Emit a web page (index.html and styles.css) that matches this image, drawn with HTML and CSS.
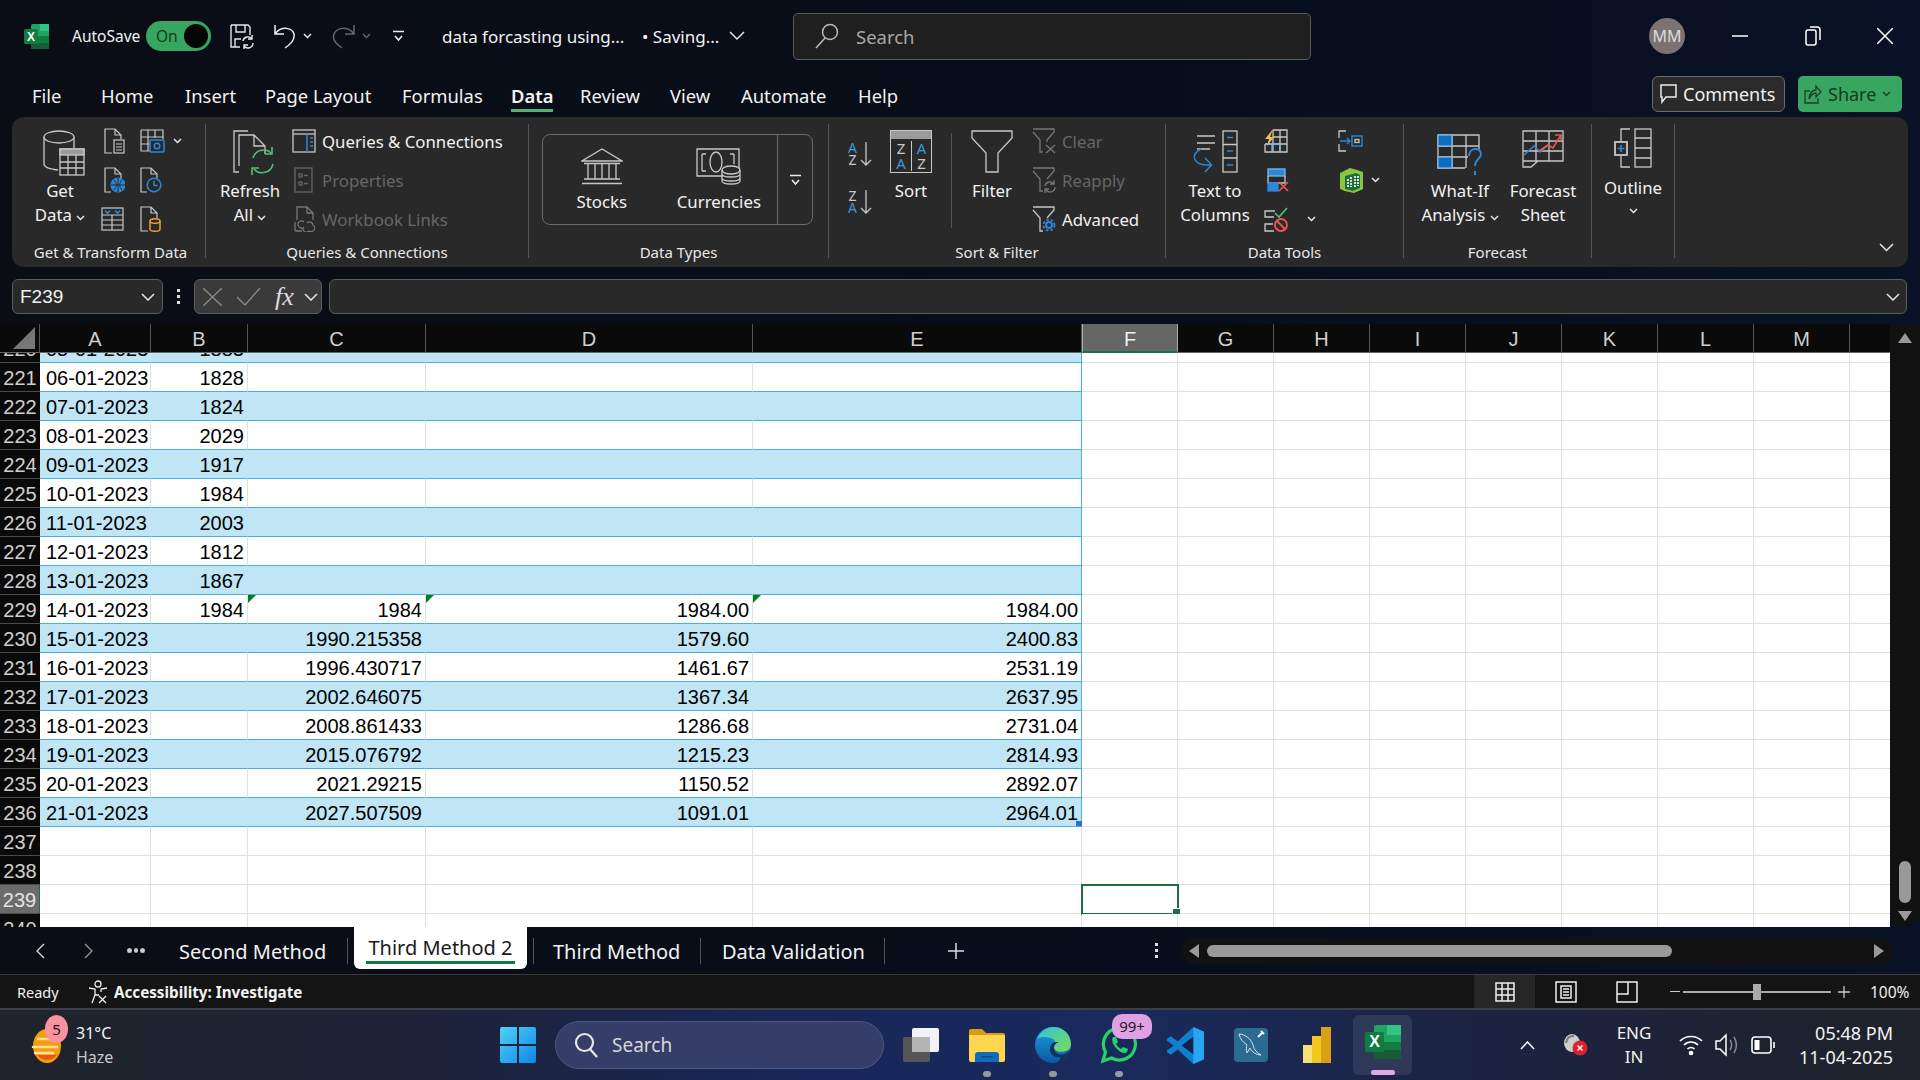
FILE: index.html
```html
<!DOCTYPE html>
<html lang="en">
<head>
    <meta charset="UTF-8">
    <title>data forcasting using - Excel</title>
    <link rel="stylesheet" href="styles.css">
</head>
<body>
    <!-- title bar -->
    <header class="titlebar">
        <svg class="xl-logo" width="25" height="25" viewBox="0 0 25 25">
            <rect x="7" y="0" width="18" height="25" rx="2" fill="#21a366"/>
            <rect x="16" y="0" width="9" height="7" fill="#33c481"/>
            <rect x="7" y="12" width="18" height="7" fill="#107c41"/>
            <rect x="7" y="19" width="18" height="6" rx="1" fill="#185c37"/>
            <rect x="0" y="5" width="14" height="15" rx="1.5" fill="#107c41"/>
            <text x="7" y="16.5" class="xl-x">X</text>
        </svg>
        <span class="autosave">AutoSave</span>
        <div class="toggle"><span>On</span><i></i></div>
        <svg class="qat-save" width="24" height="25" viewBox="0 0 24 25" fill="none" stroke="#e6e6e6" stroke-width="1.4">
            <path d="M1 1h17l2 2v8M1 1v22h9M6 1v7h9V1M5 23v-8h6"/>
            <path d="M13 17a5 5 0 0 1 9-2m1 4a5 5 0 0 1-9 3M22 11v4h-4M14 25v-4h4"/>
        </svg>
        <svg class="qat-undo" width="22" height="26" viewBox="0 0 22 26" fill="none" stroke="#eee" stroke-width="1.5">
            <path d="M2 2v9h9M2 11C8 3 19 4 21 11c1 5-3 10-9 14"/>
        </svg>
        <svg class="chev qat-c1" width="9" height="6" viewBox="0 0 9 6"><path d="M1 1l3.500 3.500L8 1"/></svg>
        <svg class="qat-redo" width="25" height="26" viewBox="0 0 25 26" fill="none" stroke="#666" stroke-width="1.500">
            <path d="M23 2v9h-9M23 11C17 3 6 4 3 11c-2 5 2 10 8 14"/>
        </svg>
        <svg class="chev dim qat-c2" width="9" height="6" viewBox="0 0 9 6"><path d="M1 1l3.500 3.500L8 1"/></svg>
        <svg class="qat-more" width="11" height="12" viewBox="0 0 11 12" fill="none" stroke="#eee" stroke-width="1.500">
            <path d="M0 1.500h11M2 6l3.500 4L9 6"/>
        </svg>
        <span class="doc-name">data forcasting using...</span>
        <span class="doc-state">&bull; Saving...</span>
        <svg class="chev big-chev" width="16" height="10" viewBox="0 0 16 10"><path d="M1 1l7 7 7-7"/></svg>
        <div class="title-search">
            <svg width="24" height="26" viewBox="0 0 24 26" fill="none" stroke="#bbb" stroke-width="1.500">
                <circle cx="15" cy="9" r="7.500"/><path d="M10 15L1 25"/>
            </svg>
            <span>Search</span>
        </div>
        <div class="avatar">MM</div>
        <div class="win-btn btn-min"><svg width="16" height="2" viewBox="0 0 16 2"><path d="M0 1h16" stroke="#fff" stroke-width="1.500"/></svg></div>
        <div class="win-btn btn-max"><svg width="16" height="22" viewBox="0 0 16 22" fill="none" stroke="#fff" stroke-width="1.500"><rect x="1" y="5" width="10" height="15" rx="2"/><path d="M5 2h7a3 3 0 0 1 3 3v10"/></svg></div>
        <div class="win-btn btn-close"><svg width="16" height="16" viewBox="0 0 16 16" stroke="#fff" stroke-width="1.500"><path d="M0 0l16 16M16 0L0 16"/></svg></div>
    </header>

    <!-- ribbon tabs -->
    <nav class="menubar">
        <div class="menu-tabs">
            <span>File</span><span>Home</span><span>Insert</span><span>Page Layout</span><span>Formulas</span>
            <span class="on">Data</span><span>Review</span><span>View</span><span>Automate</span><span>Help</span>
        </div>
        <div class="btn-comments">
            <svg width="17" height="20" viewBox="0 0 17 20" fill="none" stroke="#eee" stroke-width="1.500"><path d="M1 1h15v12H6l-4 5v-5H1z"/></svg>
            Comments
        </div>
        <div class="btn-share">
            <svg width="18" height="20" viewBox="0 0 18 20" fill="none" stroke="#1c3d28" stroke-width="1.300"><path d="M6 7H1v12h13v-5M5 15c0-6 4-9 7-9V2l5 6-5 5V9c-3 0-5 2-7 6z"/></svg>
            Share
            <svg class="chev dark" width="9" height="6" viewBox="0 0 9 6"><path d="M1 1l3.500 3.500L8 1"/></svg>
        </div>
    </nav>

    <!-- ribbon -->
    <section class="ribbon">
        <div class="group g-transform">
            <div class="group-body">
                <div class="big w88">
                    <div class="big-icon">
                        <svg class="shift-r" width="42" height="46" viewBox="0 0 42 46" fill="none" stroke="#c8c8c8" stroke-width="1.300">
                            <ellipse cx="16" cy="7" rx="15" ry="6"/>
                            <path d="M1 7v27c0 3 5 5 14 6M31 7v11"/>
                            <rect x="17" y="19" width="24" height="26" fill="#2a2a2a"/>
                            <rect x="17" y="19" width="24" height="6" fill="#9a9a9a"/>
                            <path d="M17 32h24M17 38h24M25 25v20M33 25v20"/>
                        </svg>
                    </div>
                    <span>Get</span>
                    <span>Data <svg class="chev" width="9" height="6" viewBox="0 0 9 6"><path d="M1 1l3.500 3.500L8 1"/></svg></span>
                </div>
                <div class="stack w36">
                    <div class="s-row">
                        <svg width="21" height="26" viewBox="0 0 21 26" fill="none" stroke="#c8c8c8" stroke-width="1.200"><path d="M8 25H1V1h10l6 6v4M11 1v6h6"/><rect x="10" y="12" width="10" height="13"/><path d="M12 16h6M12 19h6M12 22h6"/></svg>
                    </div>
                    <div class="s-row">
                        <svg width="21" height="26" viewBox="0 0 21 26" fill="none" stroke="#c8c8c8" stroke-width="1.200"><path d="M7 25H1V1h10l6 6v5M11 1v6h6"/><circle cx="14" cy="18" r="7" fill="#2b88d8" stroke="#2b88d8"/><path d="M7 18h14M14 11v14M10 13c3 3 3 7 0 10M18 13c-3 3-3 7 0 10" stroke="#2a2a2a" stroke-width="1"/></svg>
                    </div>
                    <div class="s-row nudge-l">
                        <svg width="23" height="24" viewBox="0 0 23 24" fill="none" stroke="#c8c8c8" stroke-width="1.200"><rect x="1" y="1" width="21" height="22"/><path d="M4 3.500l2.500 2.500L9 3.500M14 3.500l2.500 2.500L19 3.500" stroke="#2b88d8" stroke-width="1.600"/><path d="M1 8h21M1 13h21M1 18h21M11 8v15"/></svg>
                    </div>
                </div>
                <div class="stack w64">
                    <div class="s-row">
                        <svg width="25" height="24" viewBox="0 0 25 24" fill="none" stroke="#c8c8c8" stroke-width="1.200"><path d="M1 1h22v9M1 1v21h9M1 8h22M1 15h9M8 1v21M15 1v8"/><rect x="10" y="11" width="14" height="12" rx="1" stroke="#2b88d8" stroke-width="1.500"/><circle cx="17" cy="17" r="2.800" stroke="#2b88d8" stroke-width="1.500"/></svg>
                        <svg class="chev gap-chev" width="9" height="6" viewBox="0 0 9 6"><path d="M1 1l3.500 3.500L8 1"/></svg>
                    </div>
                    <div class="s-row">
                        <svg width="22" height="26" viewBox="0 0 22 26" fill="none" stroke="#c8c8c8" stroke-width="1.200"><path d="M7 25H1V1h10l6 6v4M11 1v6h6"/><circle cx="14" cy="18" r="6.800" stroke="#2b88d8" stroke-width="1.500"/><path d="M14 14v4.500h3.500" stroke="#2b88d8" stroke-width="1.400"/></svg>
                    </div>
                    <div class="s-row">
                        <svg width="22" height="26" viewBox="0 0 22 26" fill="none" stroke="#c8c8c8" stroke-width="1.200"><path d="M8 25H1V1h10l6 6v5M11 1v6h6"/><path d="M10 15c0-3 10-3 10 0v8c0 3-10 3-10 0z" stroke="#e8a33d" stroke-width="1.500"/><path d="M10 15c0 3 10 3 10 0" stroke="#e8a33d" stroke-width="1.500"/></svg>
                    </div>
                </div>
            </div>
            <div class="group-label">Get &amp; Transform Data</div>
        </div>

        <div class="group g-queries">
            <div class="group-body">
                <div class="big w80">
                    <div class="big-icon">
                        <svg class="shift-r" width="42" height="46" viewBox="0 0 42 46" fill="none" stroke="#c8c8c8" stroke-width="1.300">
                            <path d="M6 42H1V1h14M6 36V5h15l11 11v8M21 5v11h11"/>
                            <path d="M20 28a11 11 0 0 1 19-4M40 34a11 11 0 0 1-19 5M39 17v7h-7M19 45v-7h7" stroke="#4ec274" stroke-width="1.600"/>
                        </svg>
                    </div>
                    <span>Refresh</span>
                    <span>All <svg class="chev" width="9" height="6" viewBox="0 0 9 6"><path d="M1 1l3.500 3.500L8 1"/></svg></span>
                </div>
                <div class="stack wide">
                    <div class="s-row">
                        <svg class="s-ic" width="24" height="26" viewBox="0 0 24 26" fill="none" stroke="#c8c8c8" stroke-width="1.300"><rect x="1" y="2" width="22" height="22"/><path d="M1 6h22"/><path d="M15 6v18" stroke="#2b88d8" stroke-width="1.500"/><path d="M18 10h3M18 14h3M18 18h3" stroke="#2b88d8" stroke-width="1.500"/></svg>
                        <span>Queries &amp; Connections</span>
                    </div>
                    <div class="s-row off">
                        <svg class="s-ic" width="24" height="26" viewBox="0 0 24 26" fill="none" stroke="#666" stroke-width="1.300"><rect x="3" y="1" width="17" height="24"/><rect x="7" y="7" width="3" height="3"/><rect x="7" y="15" width="3" height="3"/><path d="M12 8.500h4M12 16.500h4"/></svg>
                        <span>Properties</span>
                    </div>
                    <div class="s-row off">
                        <svg class="s-ic" width="24" height="26" viewBox="0 0 24 26" fill="none" stroke="#777" stroke-width="1.300"><path d="M5 14V1h10l6 6v7M15 1v6h6M3 25v-9M3 25h7"/><path d="M12 16a3.500 3.500 0 0 0-6 3 3.500 3.500 0 0 0 6 2M11 22a3.500 3.500 0 0 0 6 3 3.500 3.500 0 0 0 4-6 3.500 3.500 0 0 0-6-2"/></svg>
                        <span>Workbook Links</span>
                    </div>
                </div>
            </div>
            <div class="group-label">Queries &amp; Connections</div>
        </div>

        <div class="group g-types">
            <div class="group-body">
                <div class="type-box">
                    <div class="type-item w118">
                        <svg width="42" height="37" viewBox="0 0 42 37" fill="none" stroke="#c8c8c8" stroke-width="1.300"><path d="M21 1L1 13h40zM3 15.500h36M7 16v15M14 16v15M21 16v15M28 16v15M35 16v15M3 31h36M1 35.500h40"/></svg>
                        <span>Stocks</span>
                    </div>
                    <div class="type-item w117">
                        <svg width="46" height="37" viewBox="0 0 46 37" fill="none" stroke="#c8c8c8" stroke-width="1.300"><path d="M27 28H1V1h42v20"/><path d="M6 6v17M10 6H6M6 23h4M38 6v10M34 6h4"/><ellipse cx="20" cy="14" rx="6" ry="10"/><ellipse cx="35" cy="22" rx="9" ry="4" fill="#2a2a2a"/><path d="M26 22v11c0 2 4 3 9 3s9-1 9-3V22M26 26c0 2 4 3 9 3s9-1 9-3M26 30c0 2 4 3 9 3s9-1 9-3"/></svg>
                        <span>Currencies</span>
                    </div>
                    <div class="type-drop">
                        <svg width="11" height="12" viewBox="0 0 11 12" fill="none" stroke="#eee" stroke-width="1.500"><path d="M0 1.500h11M2 6l3.500 4L9 6"/></svg>
                    </div>
                </div>
            </div>
            <div class="group-label">Data Types</div>
        </div>

        <div class="group g-sort">
            <div class="group-body">
                <div class="sort-col">
                    <div class="az">
                        <div class="az-letters"><b>A</b><span>Z</span></div>
                        <svg width="12" height="24" viewBox="0 0 12 24" fill="none" stroke="#c8c8c8" stroke-width="1.300"><path d="M6 0v23M1 18l5 5 5-5"/></svg>
                    </div>
                    <div class="az">
                        <div class="az-letters"><span>Z</span><b>A</b></div>
                        <svg width="12" height="24" viewBox="0 0 12 24" fill="none" stroke="#c8c8c8" stroke-width="1.300"><path d="M6 0v23M1 18l5 5 5-5"/></svg>
                    </div>
                </div>
                <div class="big w42">
                    <div class="big-icon">
                        <div class="sort-ic">
                            <div class="sort-head"></div>
                            <div class="sort-cols"><div><span>Z</span><b>A</b></div><div><b>A</b><span>Z</span></div></div>
                        </div>
                    </div>
                    <span>Sort</span>
                </div>
                <div class="v-sep"></div>
                <div class="big w42">
                    <div class="big-icon">
                        <svg width="42" height="43" viewBox="0 0 42 43" fill="none" stroke="#c8c8c8" stroke-width="1.300"><path d="M1 1h40v7L27 23v19H15V23L1 8z"/></svg>
                    </div>
                    <span>Filter</span>
                </div>
                <div class="stack f-stack">
                    <div class="s-row off">
                        <svg class="s-ic" width="24" height="26" viewBox="0 0 24 26" fill="none" stroke="#777" stroke-width="1.300"><path d="M1 1h21v3l-7 8v2M1 4l7 8v12h3"/><path d="M14 17l9 8M23 17l-9 8"/></svg>
                        <span>Clear</span>
                    </div>
                    <div class="s-row off">
                        <svg class="s-ic" width="24" height="26" viewBox="0 0 24 26" fill="none" stroke="#777" stroke-width="1.300"><path d="M1 1h21v3l-7 8M1 4l7 8v12h3"/><path d="M13 19a5 5 0 0 1 9-2M23 20a5 5 0 0 1-9 3M22 13v4h-4M13 26v-4h4"/></svg>
                        <span>Reapply</span>
                    </div>
                    <div class="s-row">
                        <svg class="s-ic" width="24" height="26" viewBox="0 0 24 26" fill="none" stroke="#c8c8c8" stroke-width="1.300"><path d="M1 1h21v3l-7 8M1 4l7 8v13h3"/><circle cx="17" cy="19" r="3" stroke="#2b88d8" stroke-width="2"/><circle cx="17" cy="19" r="5.500" stroke="#2b88d8" stroke-width="1.800" stroke-dasharray="2.500 2"/></svg>
                        <span>Advanced</span>
                    </div>
                </div>
            </div>
            <div class="group-label">Sort &amp; Filter</div>
        </div>

        <div class="group g-tools">
            <div class="group-body">
                <div class="big w74">
                    <div class="big-icon">
                        <svg width="46" height="44" viewBox="0 0 46 44" fill="none" stroke="#c8c8c8" stroke-width="1.300"><path d="M5 6h18M5 13h18M5 19h13"/><rect x="31" y="1" width="14" height="41"/><path d="M31 14.500h14M31 28h14"/><path d="M35 7.500h6M35 21h6M35 35h6" stroke="#2b88d8" stroke-width="1.500"/><path d="M9 19C-2 24 0 36 19 35M13 28l6.500 7-6.500 7" stroke="#2b88d8" stroke-width="1.500"/></svg>
                    </div>
                    <span>Text to</span>
                    <span>Columns</span>
                </div>
                <div class="stack w74b">
                    <div class="s-row">
                        <svg width="24" height="24" viewBox="0 0 24 24" fill="none" stroke="#c8c8c8" stroke-width="1.300"><path d="M9 1h14v22H1v-8M9 1v22M16 1v22M9 8h14M1 15h22"/><path d="M8 15v8M16 15v8M1 15h15" stroke="#7ab8e8"/><path d="M9 0L1 10h4l-2 7 7-9H6l3-8z" fill="#f2c14e" stroke="none"/></svg>
                    </div>
                    <div class="s-row nudge-r">
                        <svg width="22" height="25" viewBox="0 0 22 25" fill="none" stroke="#c8c8c8" stroke-width="1.300"><rect x="1" y="1" width="17" height="7" fill="#2b88d8" stroke="#7ab8e8"/><path d="M1 8v7h17V8"/><rect x="1" y="15" width="10" height="8" fill="#2b88d8" stroke="#2b88d8"/><path d="M12 14l9 9M21 14l-9 9" stroke="#e85858" stroke-width="1.700"/></svg>
                    </div>
                    <div class="s-row">
                        <svg width="25" height="25" viewBox="0 0 25 25" fill="none" stroke="#c8c8c8" stroke-width="1.300"><path d="M11 4H1v6h9M9 17H1v7h9"/><path d="M11 6l4 4 8-9" stroke="#4ec274" stroke-width="1.600"/><circle cx="17" cy="18" r="6" stroke="#e85858" stroke-width="1.800"/><path d="M13 14l8 8" stroke="#e85858" stroke-width="1.800"/></svg>
                        <svg class="chev gap-chev2" width="9" height="6" viewBox="0 0 9 6"><path d="M1 1l3.500 3.500L8 1"/></svg>
                    </div>
                </div>
                <div class="stack">
                    <div class="s-row">
                        <svg width="25" height="22" viewBox="0 0 25 22" fill="none" stroke="#c8c8c8" stroke-width="1.300"><path d="M8 1H1v7M1 14v7h7"/><path d="M2 11h10M9 8l3 3-3 3" stroke="#2b88d8" stroke-width="1.400"/><rect x="14" y="6" width="10" height="10" stroke="#2b88d8" stroke-width="1.400"/><rect x="17" y="9.500" width="4" height="3" stroke="#c8c8c8"/></svg>
                    </div>
                    <div class="s-row">
                        <svg width="25" height="25" viewBox="0 0 25 25"><path d="M2 5l10-5 7 2 6 2v17l-9 4-9-2-5-2z" fill="#8cc63f"/><path d="M7 8l11-3 4 2v13l-7 3-8-2z" fill="#1e6b3c"/><path d="M10 11v8M13 9v10M17 8v11M20 8v10" stroke="#fff" stroke-width="1.600" stroke-dasharray="2 1"/></svg>
                        <svg class="chev gap-chev3" width="9" height="6" viewBox="0 0 9 6"><path d="M1 1l3.500 3.500L8 1"/></svg>
                    </div>
                </div>
            </div>
            <div class="group-label">Data Tools</div>
        </div>

        <div class="group g-forecast">
            <div class="group-body">
                <div class="big w92">
                    <div class="big-icon icon-low">
                        <svg width="46" height="42" viewBox="0 0 46 42" fill="none" stroke="#c8c8c8" stroke-width="1.300"><path d="M1 1h41v14M1 1v33h27M1 12h41M1 23h30M15 1v33M29 1v33"/><rect x="1" y="1" width="14" height="11" fill="#0f6cbd" stroke="#7ab8e8"/><rect x="1" y="23" width="14" height="11" fill="#0f6cbd" stroke="#7ab8e8"/><path d="M32 22c0-9 12-9 12-2 0 5-6 5-6 12M38 37v4" stroke="#2b88d8" stroke-width="2"/></svg>
                    </div>
                    <span>What-If</span>
                    <span>Analysis <svg class="chev" width="9" height="6" viewBox="0 0 9 6"><path d="M1 1l3.500 3.500L8 1"/></svg></span>
                </div>
                <div class="big w74">
                    <div class="big-icon">
                        <svg width="42" height="38" viewBox="0 0 42 38" fill="none" stroke="#c8c8c8" stroke-width="1.300"><path d="M1 37V1h40v30H16l-7 6zM1 31h15M14 1v30M27 1v30M1 11h40M1 21h40"/><path d="M2 25l10-9 6 6 9-8" stroke="#2b88d8" stroke-width="1.600"/><path d="M17 21l9-6 5 3 8-13M33 5h6v6" stroke="#e85858" stroke-width="1.600"/></svg>
                    </div>
                    <span>Forecast</span>
                    <span>Sheet</span>
                </div>
            </div>
            <div class="group-label">Forecast</div>
        </div>

        <div class="group g-outline">
            <div class="big outline">
                <div class="big-icon">
                    <svg width="38" height="40" viewBox="0 0 38 40" fill="none" stroke="#c8c8c8" stroke-width="1.300"><rect x="21" y="1" width="16" height="38"/><path d="M21 10h16M21 20h16M21 30h16M16 1H7v12M7 28v11h9"/><rect x="1" y="14" width="12" height="13" stroke-width="1.800"/><path d="M7 17v7M3.500 20.500h7" stroke="#2b88d8" stroke-width="1.700"/></svg>
                </div>
                <span>Outline</span>
                <svg class="chev outline-chev" width="9" height="6" viewBox="0 0 9 6"><path d="M1 1l3.500 3.500L8 1"/></svg>
            </div>
        </div>

        <div class="ribbon-end">
            <svg class="chev" width="15" height="9" viewBox="0 0 15 9"><path d="M1 1l6.500 6.500L14 1"/></svg>
        </div>
    </section>

    <!-- formula bar -->
    <div class="formula-bar">
        <div class="name-box">F239
            <svg class="chev" width="14" height="8" viewBox="0 0 14 8"><path d="M1 1l6 6 6-6"/></svg>
        </div>
        <div class="fx-dots"><i></i><i></i><i></i></div>
        <div class="fx-box">
            <svg width="19" height="18" viewBox="0 0 19 18" stroke="#888" stroke-width="1.400"><path d="M0 0l19 18M19 0L0 18"/></svg>
            <svg class="fx-check" width="24" height="18" viewBox="0 0 24 18" fill="none" stroke="#888" stroke-width="1.400"><path d="M0 9l8 8L23 0"/></svg>
            <em>fx</em>
            <svg class="chev" width="14" height="8" viewBox="0 0 14 8"><path d="M1 1l6 6 6-6"/></svg>
        </div>
        <div class="fx-input">
            <svg class="chev" width="14" height="8" viewBox="0 0 14 8"><path d="M1 1l6 6 6-6"/></svg>
        </div>
    </div>

    <!-- worksheet -->
    <div class="sheet">
        <div class="grid-area">
            <div class="col-heads">
                <div class="corner"><svg width="22" height="22" viewBox="0 0 22 22"><path d="M22 0v22H0z" fill="#777"/></svg></div>
                <div class="ch w111">A</div>
                <div class="ch w97">B</div>
                <div class="ch w178">C</div>
                <div class="ch w327">D</div>
                <div class="ch w329">E</div>
                <div class="ch w96 sel">F</div>
                <div class="ch w96">G</div>
                <div class="ch w96">H</div>
                <div class="ch w96">I</div>
                <div class="ch w96">J</div>
                <div class="ch w96">K</div>
                <div class="ch w96">L</div>
                <div class="ch w96">M</div>
            </div>
            <div class="cells">
                <table>
                    <colgroup><col class="c-h"><col class="c-a"><col class="c-b"><col class="c-c"><col class="c-d"><col class="c-e"><col></colgroup>
                    <tr class="blue"><th>220</th><td>05-01-2023</td><td class="n">1883</td><td></td><td></td><td class="last"></td><td class="rest"></td></tr>
                    <tr><th>221</th><td>06-01-2023</td><td class="n">1828</td><td></td><td></td><td class="last"></td><td class="rest"></td></tr>
                    <tr class="blue"><th>222</th><td>07-01-2023</td><td class="n">1824</td><td></td><td></td><td class="last"></td><td class="rest"></td></tr>
                    <tr><th>223</th><td>08-01-2023</td><td class="n">2029</td><td></td><td></td><td class="last"></td><td class="rest"></td></tr>
                    <tr class="blue"><th>224</th><td>09-01-2023</td><td class="n">1917</td><td></td><td></td><td class="last"></td><td class="rest"></td></tr>
                    <tr><th>225</th><td>10-01-2023</td><td class="n">1984</td><td></td><td></td><td class="last"></td><td class="rest"></td></tr>
                    <tr class="blue"><th>226</th><td>11-01-2023</td><td class="n">2003</td><td></td><td></td><td class="last"></td><td class="rest"></td></tr>
                    <tr><th>227</th><td>12-01-2023</td><td class="n">1812</td><td></td><td></td><td class="last"></td><td class="rest"></td></tr>
                    <tr class="blue"><th>228</th><td>13-01-2023</td><td class="n">1867</td><td></td><td></td><td class="last"></td><td class="rest"></td></tr>
                    <tr><th>229</th><td>14-01-2023</td><td class="n">1984</td><td class="n flag">1984</td><td class="n flag">1984.00</td><td class="n flag last">1984.00</td><td class="rest"></td></tr>
                    <tr class="blue"><th>230</th><td>15-01-2023</td><td></td><td class="n">1990.215358</td><td class="n">1579.60</td><td class="n last">2400.83</td><td class="rest"></td></tr>
                    <tr><th>231</th><td>16-01-2023</td><td></td><td class="n">1996.430717</td><td class="n">1461.67</td><td class="n last">2531.19</td><td class="rest"></td></tr>
                    <tr class="blue"><th>232</th><td>17-01-2023</td><td></td><td class="n">2002.646075</td><td class="n">1367.34</td><td class="n last">2637.95</td><td class="rest"></td></tr>
                    <tr><th>233</th><td>18-01-2023</td><td></td><td class="n">2008.861433</td><td class="n">1286.68</td><td class="n last">2731.04</td><td class="rest"></td></tr>
                    <tr class="blue"><th>234</th><td>19-01-2023</td><td></td><td class="n">2015.076792</td><td class="n">1215.23</td><td class="n last">2814.93</td><td class="rest"></td></tr>
                    <tr><th>235</th><td>20-01-2023</td><td></td><td class="n">2021.29215</td><td class="n">1150.52</td><td class="n last">2892.07</td><td class="rest"></td></tr>
                    <tr class="blue"><th>236</th><td>21-01-2023</td><td></td><td class="n">2027.507509</td><td class="n">1091.01</td><td class="n last corner-handle">2964.01</td><td class="rest"></td></tr>
                    <tr class="plain"><th>237</th><td></td><td></td><td></td><td></td><td></td><td class="rest"></td></tr>
                    <tr class="plain"><th>238</th><td></td><td></td><td></td><td></td><td></td><td class="rest"></td></tr>
                    <tr class="plain"><th class="sel">239</th><td></td><td></td><td></td><td></td><td></td><td class="rest"><div class="active-cell"></div></td></tr>
                    <tr class="plain"><th>240</th><td></td><td></td><td></td><td></td><td></td><td class="rest"></td></tr>
                </table>
            </div>
        </div>
        <div class="v-scroll">
            <svg width="14" height="10" viewBox="0 0 14 10"><path d="M7 0l7 10H0z" fill="#999"/></svg>
            <div class="v-thumb"></div>
            <svg width="14" height="10" viewBox="0 0 14 10"><path d="M7 10l7-10H0z" fill="#999"/></svg>
        </div>
    </div>

    <!-- sheet tabs -->
    <div class="tabs-bar">
        <svg class="nav-prev" width="9" height="16" viewBox="0 0 9 16" fill="none" stroke="#ddd" stroke-width="1.300"><path d="M8 1L1 8l7 7"/></svg>
        <svg class="nav-next" width="9" height="16" viewBox="0 0 9 16" fill="none" stroke="#999" stroke-width="1.300"><path d="M1 1l7 7-7 7"/></svg>
        <div class="nav-more"><i></i><i></i><i></i></div>
        <div class="tab t1">Second Method</div>
        <div class="tab t2 on"><span>Third Method 2</span></div>
        <div class="tab t3">Third Method</div>
        <div class="tab t4">Data Validation</div>
        <svg class="tab-add" width="16" height="16" viewBox="0 0 16 16" stroke="#ddd" stroke-width="1.500"><path d="M8 0v16M0 8h16"/></svg>
        <div class="tab-dots"><i></i><i></i><i></i></div>
        <div class="h-scroll">
            <svg width="10" height="14" viewBox="0 0 10 14"><path d="M0 7l10-7v14z" fill="#999"/></svg>
            <div class="h-thumb"></div>
            <svg width="10" height="14" viewBox="0 0 10 14"><path d="M10 7L0 0v14z" fill="#999"/></svg>
        </div>
    </div>

    <!-- status bar -->
    <footer class="statusbar">
        <span class="ready">Ready</span>
        <svg class="acc-ic" width="20" height="24" viewBox="0 0 20 24" fill="none" stroke="#eee" stroke-width="1.300"><circle cx="10" cy="4" r="3"/><path d="M1 8l6 1v6l-3 8M19 8l-6 1v3M7 15h4"/><path d="M11 16l7 7M18 16l-7 7"/></svg>
        <b class="acc-text">Accessibility: Investigate</b>
        <div class="view-btn on"><svg width="20" height="20" viewBox="0 0 20 20" fill="none" stroke="#eee" stroke-width="1.500"><rect x="1" y="1" width="18" height="18"/><path d="M7 1v18M13 1v18M1 7h18M1 13h18"/></svg></div>
        <div class="view-btn"><svg width="22" height="22" viewBox="0 0 22 22" fill="none" stroke="#eee" stroke-width="1.500"><rect x="1" y="1" width="20" height="20"/><rect x="6" y="5" width="10" height="12"/><path d="M8 8h6M8 11h6M8 14h6"/></svg></div>
        <div class="view-btn"><svg width="22" height="22" viewBox="0 0 22 22" fill="none" stroke="#eee" stroke-width="1.500"><rect x="1" y="1" width="20" height="20"/><path d="M12 1v12H1"/></svg></div>
        <span class="zoom-minus"></span>
        <div class="zoom-slider"><i></i></div>
        <svg class="zoom-plus" width="12" height="12" viewBox="0 0 12 12" stroke="#ccc" stroke-width="1.300"><path d="M6 0v12M0 6h12"/></svg>
        <span class="zoom-val">100%</span>
    </footer>

    <!-- windows taskbar -->
    <div class="taskbar">
        <div class="weather">
            <div class="weather-ic">
                <svg width="34" height="36" viewBox="0 0 34 36">
                    <ellipse cx="17" cy="19" rx="14" ry="17" fill="#f59e0b"/>
                    <path d="M7 28a14 17 0 0 0 20 0z" fill="#e8590c"/>
                    <path d="M8 12h22M3 20h24M5 26h18" stroke="#f7dfa0" stroke-width="2.500" stroke-linecap="round"/>
                </svg>
                <span class="weather-badge">5</span>
            </div>
            <div class="weather-text"><span>31&deg;C</span><span class="haze">Haze</span></div>
        </div>
        <svg class="start" width="36" height="36" viewBox="0 0 36 36">
            <defs><linearGradient id="win" x1="0" y1="0" x2="1" y2="1"><stop offset="0" stop-color="#4fd3f7"/><stop offset="1" stop-color="#0e86e6"/></linearGradient></defs>
            <path d="M0 2a2 2 0 0 1 2-2h15v17H0zM19 0h15a2 2 0 0 1 2 2v15H19zM0 19h17v17H2a2 2 0 0 1-2-2zM19 19h17v15a2 2 0 0 1-2 2H19z" fill="url(#win)"/>
        </svg>
        <div class="task-search">
            <svg width="24" height="26" viewBox="0 0 24 26" fill="none" stroke="#e8e8e8" stroke-width="2.200"><circle cx="10.500" cy="10.500" r="8.500"/><path d="M16 17l7 8"/></svg>
            <span>Search</span>
        </div>
        <div class="app"><svg width="37" height="34" viewBox="0 0 37 34"><rect x="0" y="9" width="27" height="25" rx="2" fill="#555"/><rect x="9" y="0" width="27" height="24" rx="2" fill="#f2f2f2"/><rect x="9" y="9" width="18" height="15" fill="#b4b4b4"/></svg></div>
        <div class="app running"><svg width="36" height="34" viewBox="0 0 36 34"><path d="M0 3a2 2 0 0 1 2-2h11l4 4h17a2 2 0 0 1 2 2v4H0z" fill="#d89b14"/><path d="M0 7h36v25a2 2 0 0 1-2 2H2a2 2 0 0 1-2-2z" fill="#ffd54f"/><path d="M6 34v-7a3 3 0 0 1 3-3h18a3 3 0 0 1 3 3v7z" fill="#0f6cbd"/><rect x="12" y="28" width="12" height="1.500" fill="#0b4f8a"/></svg></div>
        <div class="app running"><svg width="36" height="36" viewBox="0 0 38 38"><defs><linearGradient id="edge1" x1="0" y1="0" x2="1" y2="1"><stop offset="0" stop-color="#2fc3dc"/><stop offset="1" stop-color="#7ddc54"/></linearGradient><linearGradient id="edge2" x1="0" y1="0" x2="0" y2="1"><stop offset="0" stop-color="#1b9de2"/><stop offset="1" stop-color="#0c59a4"/></linearGradient></defs><circle cx="19" cy="19" r="19" fill="url(#edge2)"/><path d="M2 13C6 4 13 0 20 0c10 0 18 8 18 18 0 6-5 8-10 8-5 0-8-2-8-5 2-2 3-7-3-9C11 10 5 10 2 13z" fill="url(#edge1)"/><path d="M20 21c0 5 3 8 8 8s7-3 9-5c-2 8-9 14-16 14 4-1 6-4 6-6-6 1-13-4-11-11 1-4 5-6 9-5-3 1-5 3-5 5z" fill="#10335c"/></svg></div>
        <div class="app running"><svg width="38" height="38" viewBox="0 0 38 38" fill="none"><path d="M3 35l2.500-9a16 16 0 1 1 6 6z" stroke="#25d366" stroke-width="3.200"/><path d="M13 11c-2 3 0 8 4 12s8 5 10 3l1-3-5-2-2 2c-2-1-4-3-5-5l2-2-2-5z" fill="#25d366"/></svg><span class="wa-badge">99+</span></div>
        <div class="app"><svg width="37" height="37" viewBox="0 0 38 38"><path d="M27 0l11 5v28l-11 5-16-15-7 5.500L0 26v-2l7-5-7-5v-2l4-2.500L11 15z" fill="#0f7fd0"/><path d="M27 0l11 5v28l-11 5z" fill="#2aa5f0"/><path d="M27 10L15 19l12 9z" fill="#14214a"/></svg></div>
        <div class="app"><svg width="34" height="34" viewBox="0 0 34 34"><rect width="34" height="34" rx="4" fill="#2d6a8f"/><path d="M5 6c6 0 12 5 14 11 1 5 4 8 8 10-5 0-9-3-11-7l-3 5c-1-3-1-6 0-8-4-3-7-6-8-11z" fill="none" stroke="#d5e3ec" stroke-width="1"/><path d="M24 9l5-5M27 3l3 3" stroke="#e8f0f4" stroke-width="2"/></svg></div>
        <div class="app"><svg width="28" height="36" viewBox="0 0 28 36"><rect x="18" y="0" width="10" height="36" fill="#d9a016"/><rect x="9" y="9" width="9" height="27" fill="#f2c81e"/><rect x="0" y="18" width="9" height="18" fill="#f7df7a"/></svg></div>
        <div class="app active">
            <svg width="36" height="36" viewBox="0 0 36 36"><rect x="9" y="1" width="27" height="34" rx="2" fill="#21a366"/><rect x="22" y="1" width="14" height="10" fill="#33c481"/><rect x="9" y="18" width="27" height="9" fill="#107c41"/><rect x="9" y="26" width="27" height="9" rx="1" fill="#185c37"/><rect x="0" y="8" width="19" height="20" rx="2" fill="#107c41"/><text x="9.500" y="23" class="xl-x big-x">X</text></svg>
            <span class="active-pill"></span>
        </div>
        <svg class="chevron-up" width="15" height="9" viewBox="0 0 15 9" fill="none" stroke="#fff" stroke-width="1.500"><path d="M1 8l6.500-7L14 8"/></svg>
        <svg class="tray-cloud" width="25" height="22" viewBox="0 0 25 22"><ellipse cx="9" cy="9" rx="8" ry="9" fill="#cfcfcf"/><path d="M3 9a7 8 0 0 1 8-7" stroke="#777" fill="none" stroke-width="2"/><circle cx="17" cy="14" r="7.500" fill="#e0202e"/><path d="M14.500 11.500l5 5M19.500 11.500l-5 5" stroke="#fff" stroke-width="1.500"/></svg>
        <div class="lang"><span>ENG</span><span>IN</span></div>
        <svg class="tray-wifi" width="24" height="22" viewBox="0 0 24 22" fill="none" stroke="#fff" stroke-width="1.700"><path d="M1 7c6-6 16-6 22 0M5 11c4-4 10-4 14 0M8.500 15c2-2 5-2 7 0"/><circle cx="12" cy="19" r="1.500" fill="#fff"/></svg>
        <svg class="tray-vol" width="24" height="24" viewBox="0 0 24 24" fill="none" stroke="#fff" stroke-width="1.500"><path d="M1 8h4l6-6v20l-6-6H1z"/><path d="M15 7c2 3 2 7 0 10M19 4c3 5 3 11 0 16" stroke="#888"/></svg>
        <svg class="tray-batt" width="24" height="18" viewBox="0 0 24 18" fill="none" stroke="#fff" stroke-width="1.600"><rect x="1" y="1" width="19" height="16" rx="3"/><rect x="3.500" y="4" width="5" height="10" fill="#fff" stroke="none"/><path d="M23 6v6"/></svg>
        <div class="clock"><span>05:48 PM</span><span>11-04-2025</span></div>
    </div>
</body>
</html>
```

FILE: styles.css
```css
* {
    box-sizing: border-box;
}

html, body {
    margin: 0;
    padding: 0;
}

body {
    width: 1920px;
    height: 1080px;
    overflow: hidden;
    display: flex;
    flex-direction: column;
    font-family: 'Noto Sans', sans-serif;
    font-size: 17px;
    color: #f2f2f2;
    background: linear-gradient(90deg, #0b0d14 0%, #070d1a 60%, #091226 100%);
}

svg {
    flex-shrink: 0;
    display: block;
}

.chev {
    display: inline-block;
    fill: none;
    stroke: #e6e6e6;
    stroke-width: 1.500;
}

.chev.dim {
    stroke: #666;
}

.chev.dark {
    stroke: #1c3d28;
}

.xl-x {
    font-family: 'Liberation Sans', sans-serif;
    font-weight: bold;
    font-size: 12px;
    fill: #fff;
    text-anchor: middle;
}

.xl-x.big-x {
    font-size: 16px;
}

/* title bar */
.titlebar {
    height: 72px;
    display: flex;
    align-items: center;
    padding-left: 24px;
    flex-shrink: 0;
}

.autosave {
    margin-left: 23px;
    width: 66px;
    font-size: 15.500px;
    white-space: nowrap;
}

.toggle {
    margin-left: 8px;
    width: 65px;
    height: 30px;
    border-radius: 15px;
    background: #38a660;
    display: flex;
    align-items: center;
    justify-content: space-between;
    padding: 0 3px 0 10px;
    color: #123d22;
    font-size: 15.500px;
}

.toggle i {
    width: 24px;
    height: 24px;
    border-radius: 50%;
    background: #050505;
}

.qat-save { margin-left: 19px; }
.qat-undo { margin-left: 19px; }
.qat-c1 { margin-left: 8px; }
.qat-redo { margin-left: 19px; }
.qat-c2 { margin-left: 6px; }
.qat-more { margin-left: 22px; }

.doc-name {
    margin-left: 38px;
    width: 200px;
    white-space: nowrap;
    font-size: 17px;
}

.doc-state {
    width: 87px;
    white-space: nowrap;
    font-size: 17px;
}

.title-search {
    margin-left: 48px;
    width: 518px;
    height: 47px;
    border: 1px solid #5a5a5a;
    border-radius: 5px;
    background: #1f1f1f;
    display: flex;
    align-items: center;
    padding-left: 21px;
    color: #a8a8a8;
    font-size: 18.500px;
}

.title-search span {
    margin-left: 17px;
}

.avatar {
    margin-left: 338px;
    width: 36px;
    height: 36px;
    border-radius: 50%;
    background: #7b7373;
    color: #dcdcdc;
    font-size: 16px;
    display: flex;
    align-items: center;
    justify-content: center;
}

.win-btn {
    display: flex;
    justify-content: center;
}

.btn-min { margin-left: 47px; width: 16px; }
.btn-max { margin-left: 57px; width: 16px; }
.btn-close { margin-left: 56px; width: 16px; }

/* ribbon tabs */
.menubar {
    height: 45px;
    display: flex;
    align-items: flex-start;
    padding-left: 32px;
    flex-shrink: 0;
}

.menu-tabs {
    display: grid;
    grid-template-columns: 69px 84px 80px 137px 109px 69px 90px 71px 117px 60px;
    width: 1620px;
    height: 45px;
    font-size: 18.400px;
    line-height: 48px;
}

.menu-tabs span {
    justify-self: start;
    height: 40px;
    white-space: nowrap;
}

.menu-tabs .on {
    font-weight: 600;
    border-bottom: 3px solid #4fb37a;
}

.btn-comments {
    width: 133px;
    height: 36px;
    margin-top: 4px;
    border: 1px solid #6a6a6a;
    border-radius: 6px;
    background: #2a2a2a;
    display: flex;
    align-items: center;
    gap: 6px;
    padding-left: 7px;
    font-size: 18px;
}

.btn-share {
    margin-left: 13px;
    margin-top: 4px;
    width: 104px;
    height: 36px;
    border-radius: 5px;
    background: #38a660;
    color: #143a22;
    display: flex;
    align-items: center;
    gap: 6px;
    padding-left: 6px;
    font-size: 18px;
}

/* ribbon */
.ribbon {
    margin: 0 12px;
    width: 1896px;
    height: 150px;
    padding-top: 7px;
    background: #292929;
    border-radius: 12px;
    display: flex;
    flex-shrink: 0;
    font-size: 16.800px;
}

.group {
    height: 134px;
    border-right: 1px solid #555;
    display: flex;
    flex-direction: column;
    flex-shrink: 0;
}

.group-body {
    height: 119px;
    display: flex;
    flex-shrink: 0;
}

.group-label {
    flex-shrink: 0;
    margin-top: -1px;
    text-align: center;
    line-height: 20px;
    font-size: 15px;
    color: #e8e8e8;
    white-space: nowrap;
}

.g-transform { width: 194px; padding-left: 4px; }
.g-queries { width: 323px; padding-left: 4px; }
.g-queries .group-label { margin-left: -4px; }
.g-types { width: 300px; }
.g-sort { width: 337px; padding-left: 17px; }
.g-sort .group-label { margin-left: -17px; }
.g-tools { width: 238px; padding-left: 12px; }
.g-tools .group-label { margin-left: -12px; }
.g-forecast { width: 188px; padding-left: 10px; }
.g-forecast .group-label { margin-left: -10px; }
.g-outline { width: 83px; }

.big {
    display: flex;
    flex-direction: column;
    align-items: center;
    padding-top: 6px;
    line-height: 24px;
    white-space: nowrap;
    flex-shrink: 0;
}

.big-icon {
    height: 49px;
}

.big-icon.icon-low {
    padding-top: 4px;
}

.shift-r {
    transform: translateX(4px);
}

.w88 { width: 88px; }
.w80 { width: 80px; }
.w42 { width: 42px; }
.w74 { width: 74px; }
.w92 { width: 92px; }
.w36 { width: 36px; }
.w64 { width: 64px; }
.w74b { width: 74px; margin-left: 12px; }

.stack {
    padding-top: 3px;
    display: grid;
    grid-template-rows: 28px 28px 28px;
    row-gap: 11px;
    flex-shrink: 0;
    align-content: start;
}

.stack.wide {
    margin-left: 2px;
}

.s-row {
    display: flex;
    align-items: center;
    white-space: nowrap;
}

.s-row.off {
    color: #666;
}

.nudge-l {
    margin-left: -3px;
}

.nudge-r {
    margin-left: 3px;
}

.s-ic {
    margin-right: 6px;
}

.gap-chev { margin-left: 8px; }
.gap-chev2 { margin-left: 18px; }
.gap-chev3 { margin-left: 8px; }

/* data types */
.type-box {
    margin: 10px 0 0 13px;
    width: 271px;
    height: 91px;
    border: 1px solid #6a6a6a;
    border-radius: 8px;
    display: flex;
}

.type-item {
    display: flex;
    flex-direction: column;
    align-items: center;
    padding-top: 13px;
}

.type-item span {
    margin-top: 5px;
    line-height: 24px;
}

.w118 { width: 118px; }
.w117 { width: 117px; }

.type-drop {
    width: 35px;
    border-left: 1px solid #6a6a6a;
    display: flex;
    align-items: center;
    justify-content: center;
}

/* sort */
.sort-col {
    width: 44px;
    padding-top: 17px;
    display: flex;
    flex-direction: column;
    gap: 23px;
}

.az {
    display: flex;
    align-items: center;
    gap: 1px;
    height: 25px;
}

.az-letters {
    width: 13px;
    font-size: 14px;
    line-height: 12px;
    color: #c8c8c8;
    text-align: center;
}

.az-letters span,
.az-letters b,
.sort-cols span,
.sort-cols b {
    display: block;
    font-weight: normal;
}

.az-letters b,
.sort-cols b {
    color: #3a96dd;
}

.sort-ic {
    width: 42px;
    height: 43px;
    border: 1px solid #c8c8c8;
}

.sort-head {
    height: 8px;
    background: #9a9a9a;
}

.sort-cols {
    display: flex;
    font-size: 15px;
    line-height: 15px;
    color: #c8c8c8;
    text-align: center;
    padding-top: 2px;
}

.sort-cols div {
    width: 20px;
}

.sort-cols div + div {
    border-left: 1px solid #c8c8c8;
}

.v-sep {
    margin: 9px 19px 0;
    width: 1px;
    height: 95px;
    background: #555;
}

.f-stack {
    margin-left: 19px;
}

/* outline */
.big.outline {
    width: 82px;
    padding-top: 4px;
    line-height: 24px;
}

.big.outline .big-icon {
    height: 48px;
}

.outline-chev {
    margin-top: 8px;
}

.ribbon-end {
    flex: 1;
    display: flex;
    justify-content: flex-end;
    padding: 119px 14px 0 0;
}

/* formula bar */
.formula-bar {
    margin-top: 12px;
    height: 35px;
    padding: 0 13px 0 12px;
    display: flex;
    flex-shrink: 0;
}

.name-box {
    width: 151px;
    border: 1px solid #5c5c5c;
    border-radius: 6px;
    background: #292929;
    display: flex;
    align-items: center;
    justify-content: space-between;
    padding: 0 7px 0 7px;
    font-family: 'Liberation Sans', sans-serif;
    font-size: 19px;
}

.fx-dots {
    width: 31px;
    display: flex;
    flex-direction: column;
    align-items: center;
    justify-content: center;
    gap: 3px;
}

.fx-dots i,
.tab-dots i {
    width: 3px;
    height: 3px;
    background: #e0e0e0;
}

.fx-box {
    width: 128px;
    border: 1px solid #5c5c5c;
    border-radius: 6px;
    background: #3a3a3a;
    display: flex;
    align-items: center;
    padding-left: 8px;
}

.fx-check {
    margin-left: 15px;
}

.fx-box em {
    width: 22px;
    margin: 0 7px 0 14px;
    font-family: 'Liberation Serif', serif;
    font-size: 26px;
    line-height: 30px;
    color: #ddd;
}

.fx-input {
    margin-left: 7px;
    flex: 1;
    border: 1px solid #5c5c5c;
    border-radius: 6px;
    background: #292929;
    display: flex;
    align-items: center;
    justify-content: flex-end;
    padding-right: 6px;
}

/* worksheet */
.sheet {
    margin-top: 10px;
    height: 603px;
    display: flex;
    flex-shrink: 0;
    font-family: 'Liberation Sans', sans-serif;
    font-size: 20px;
}

.grid-area {
    width: 1890px;
}

.col-heads {
    height: 29px;
    display: flex;
    background: #0a0a0a;
    border-bottom: 1px solid #666;
    color: #cfcfcf;
}

.corner {
    width: 40px;
    display: flex;
    justify-content: flex-end;
    align-items: flex-end;
    padding: 0 4px 3px 0;
    border-right: 1px solid #555;
}

.ch {
    border-right: 1px solid #555;
    text-align: center;
    line-height: 30px;
}

.ch.sel {
    height: 29px;
    background: #666;
    color: #f0f0f0;
    border-left: 1px solid #aaa;
    border-right: 1px solid #aaa;
    border-bottom: 2px solid #1d7044;
}

.w111 { width: 111px; }
.w96 { width: 96px; }
.w97 { width: 97px; }
.w178 { width: 178px; }
.w327 { width: 327px; }
.w329 { width: 329px; }

.cells {
    height: 574px;
    overflow: hidden;
    background: #fff;
}

.cells table {
    margin-top: -19px;
    width: 1890px;
    table-layout: fixed;
    border-collapse: separate;
    border-spacing: 0;
    color: #000;
}

.c-h { width: 40px; }
.c-a { width: 111px; }
.c-b { width: 97px; }
.c-c { width: 178px; }
.c-d { width: 327px; }
.c-e { width: 329px; }

.cells tr {
    height: 29px;
}

.cells th {
    padding: 2px 0 0;
    background: #0a0a0a;
    color: #cfcfcf;
    font-weight: normal;
    border-bottom: 1px solid #4a4a4a;
    text-align: center;
}

.cells th.sel {
    background: #6b6b6b;
    color: #e4e4e4;
    border-right: 1px solid #1d6f42;
}

.cells td {
    padding: 2px 3px 0 6px;
    border-bottom: 1px solid #45b0e1;
    border-right: 1px solid #e0e0e0;
    background: #fff;
    white-space: nowrap;
    line-height: 26px;
    height: 29px;
}

.cells td.n {
    text-align: right;
}

.cells td.last {
    border-right-color: #45b0e1;
}

.cells tr.blue td {
    background: #c0e6f5;
    border-right-color: transparent;
}

.cells tr.blue td.last {
    border-right-color: #45b0e1;
}

.cells tr.plain td {
    border-bottom-color: #e0e0e0;
}

.cells td.rest,
.cells tr.blue td.rest {
    padding: 0;
    position: relative;
    border-bottom-color: #e0e0e0;
    border-right: 0;
    background: repeating-linear-gradient(90deg, transparent 0 95px, #e0e0e0 95px 96px), #fff;
}

td.flag {
    position: relative;
}

td.flag::before {
    content: "";
    position: absolute;
    left: 0;
    top: 0;
    border-top: 8px solid #0a7d1a;
    border-right: 8px solid transparent;
}

td.corner-handle {
    position: relative;
}

td.corner-handle::after {
    content: "";
    position: absolute;
    right: -1px;
    bottom: 0;
    width: 6px;
    height: 5px;
    background: #2f6fd0;
}

.active-cell {
    position: absolute;
    left: -1px;
    top: -1px;
    width: 98px;
    height: 31px;
    border: 2px solid #1d6f42;
}

.active-cell::after {
    content: "";
    position: absolute;
    right: -4px;
    bottom: -4px;
    width: 7px;
    height: 7px;
    background: #1d6f42;
    border: 1px solid #fff;
}

.v-scroll {
    width: 30px;
    background: #111;
    border-radius: 0 0 14px 14px;
    display: flex;
    flex-direction: column;
    align-items: center;
    padding: 9px 0 6px 0;
}

.v-thumb {
    margin-top: auto;
    margin-bottom: 8px;
    width: 12px;
    height: 42px;
    border-radius: 6px;
    background: #999;
}

/* sheet tabs */
.tabs-bar {
    height: 48px;
    display: flex;
    align-items: center;
    flex-shrink: 0;
    border-bottom: 1px solid #3c3c3c;
    font-size: 20px;
}

.nav-prev { margin-left: 36px; }
.nav-next { margin-left: 39px; }

.nav-more {
    margin-left: 34px;
    width: 18px;
    display: flex;
    gap: 2px;
}

.nav-more i {
    width: 5px;
    height: 5px;
    border-radius: 50%;
    background: #ccc;
}

.tab {
    white-space: nowrap;
}

.t1 {
    margin-left: 34px;
    width: 169px;
    height: 26px;
    line-height: 28px;
    border-right: 1px solid #555;
}

.t2.on {
    margin-left: 6px;
    width: 173px;
    height: 42px;
    align-self: flex-start;
    background: #fff;
    color: #1a1a1a;
    border-radius: 0 0 6px 6px;
    padding: 2px 12px 0;
    text-align: center;
}

.t2.on span {
    display: block;
    height: 35px;
    line-height: 37px;
    white-space: nowrap;
    border-bottom: 3px solid #107c41;
}

.t3 {
    margin-left: 6px;
    padding-left: 19px;
    width: 168px;
    height: 26px;
    line-height: 28px;
    border-left: 1px solid #555;
    border-right: 1px solid #555;
}

.t4 {
    padding-left: 21px;
    width: 184px;
    height: 26px;
    line-height: 28px;
    border-right: 1px solid #555;
}

.tab-add {
    margin-left: 63px;
}

.tab-dots {
    margin-left: 191px;
    display: flex;
    flex-direction: column;
    gap: 3px;
}

.h-scroll {
    margin-left: 24px;
    width: 710px;
    height: 26px;
    border-radius: 13px;
    background: #111;
    display: flex;
    align-items: center;
    padding: 0 8px 0 7px;
}

.h-thumb {
    margin-left: 8px;
    width: 465px;
    height: 12px;
    border-radius: 6px;
    background: #999;
    margin-right: auto;
}

/* status bar */
.statusbar {
    height: 33px;
    background: #141414;
    display: flex;
    align-items: center;
    flex-shrink: 0;
    font-size: 14.500px;
}

.ready {
    margin-left: 17px;
    width: 71px;
}

.acc-text {
    margin-left: 6px;
    width: 1360px;
    font-size: 15.200px;
    font-weight: 700;
    white-space: nowrap;
}

.view-btn {
    width: 61px;
    height: 33px;
    display: flex;
    align-items: center;
    justify-content: center;
}

.view-btn.on {
    background: #262626;
}

.zoom-minus {
    margin-left: 13px;
    width: 10px;
    height: 1px;
    background: #ccc;
}

.zoom-slider {
    margin-left: 3px;
    width: 148px;
    height: 2px;
    background: #aaa;
    display: flex;
    justify-content: center;
    align-items: center;
}

.zoom-slider i {
    width: 8px;
    height: 16px;
    background: #aaa;
}

.zoom-plus {
    margin-left: 7px;
}

.zoom-val {
    margin-left: 20px;
    font-size: 15.500px;
    white-space: nowrap;
}

/* taskbar */
.taskbar {
    flex: 1;
    display: flex;
    align-items: center;
    background: linear-gradient(90deg, #20232a 0%, #1c2338 22%, #18265a 42%, #1a2a5c 58%, #1b2340 78%, #1f2229 100%);
    border-top: 2px solid #3a3f4a;
}

.weather {
    width: 500px;
    padding-left: 30px;
    display: flex;
    align-items: center;
}

.weather-ic {
    position: relative;
}

.weather-badge {
    position: absolute;
    left: 15px;
    top: -12px;
    width: 23px;
    height: 28px;
    border-radius: 50%;
    background: #f9949e;
    color: #1a1a1a;
    text-align: center;
    font-size: 15px;
    line-height: 28px;
}

.weather-text {
    margin-left: 12px;
    display: flex;
    flex-direction: column;
    font-size: 16px;
    line-height: 24px;
}

.haze {
    color: #c8c8c8;
}

.task-search {
    margin-left: 19px;
    width: 329px;
    height: 48px;
    border: 1px solid #4d5980;
    border-radius: 24px;
    background: #343e69;
    display: flex;
    align-items: center;
    padding-left: 18px;
    color: #d6d6d6;
    font-size: 19px;
}

.task-search span {
    margin-left: 14px;
}

.app {
    width: 66px;
    height: 70px;
    display: flex;
    align-items: center;
    justify-content: center;
    position: relative;
}

.task-search + .app {
    margin-left: 4px;
}

.app.running::after {
    content: "";
    position: absolute;
    left: 29px;
    bottom: 3px;
    width: 8px;
    height: 6px;
    border-radius: 3px;
    background: #999;
}

.wa-badge {
    position: absolute;
    left: 26px;
    top: 4px;
    width: 40px;
    height: 25px;
    border-radius: 10px;
    background: #e0a0e4;
    color: #1a1a1a;
    font-size: 15px;
    line-height: 25px;
    text-align: center;
}

.app.active::before {
    content: "";
    position: absolute;
    left: 3px;
    top: 5px;
    width: 59px;
    height: 60px;
    border-radius: 6px;
    background: rgba(255, 255, 255, 0.09);
}

.app.active svg {
    position: relative;
    top: -3px;
}

.active-pill {
    position: absolute;
    left: 21px;
    bottom: 5px;
    width: 24px;
    height: 5px;
    border-radius: 3px;
    background: #e3a9ec;
}

.chevron-up { margin-left: 104px; }
.tray-cloud { margin-left: 28px; }

.lang {
    margin-left: 24px;
    width: 44px;
    display: flex;
    flex-direction: column;
    align-items: center;
    font-size: 17px;
    line-height: 24px;
}

.tray-wifi { margin-left: 23px; }
.tray-vol { margin-left: 12px; }
.tray-batt { margin-left: 12px; }

.clock {
    margin-left: 18px;
    width: 100px;
    display: flex;
    flex-direction: column;
    align-items: flex-end;
    font-size: 18px;
    line-height: 24px;
    white-space: nowrap;
}
```
